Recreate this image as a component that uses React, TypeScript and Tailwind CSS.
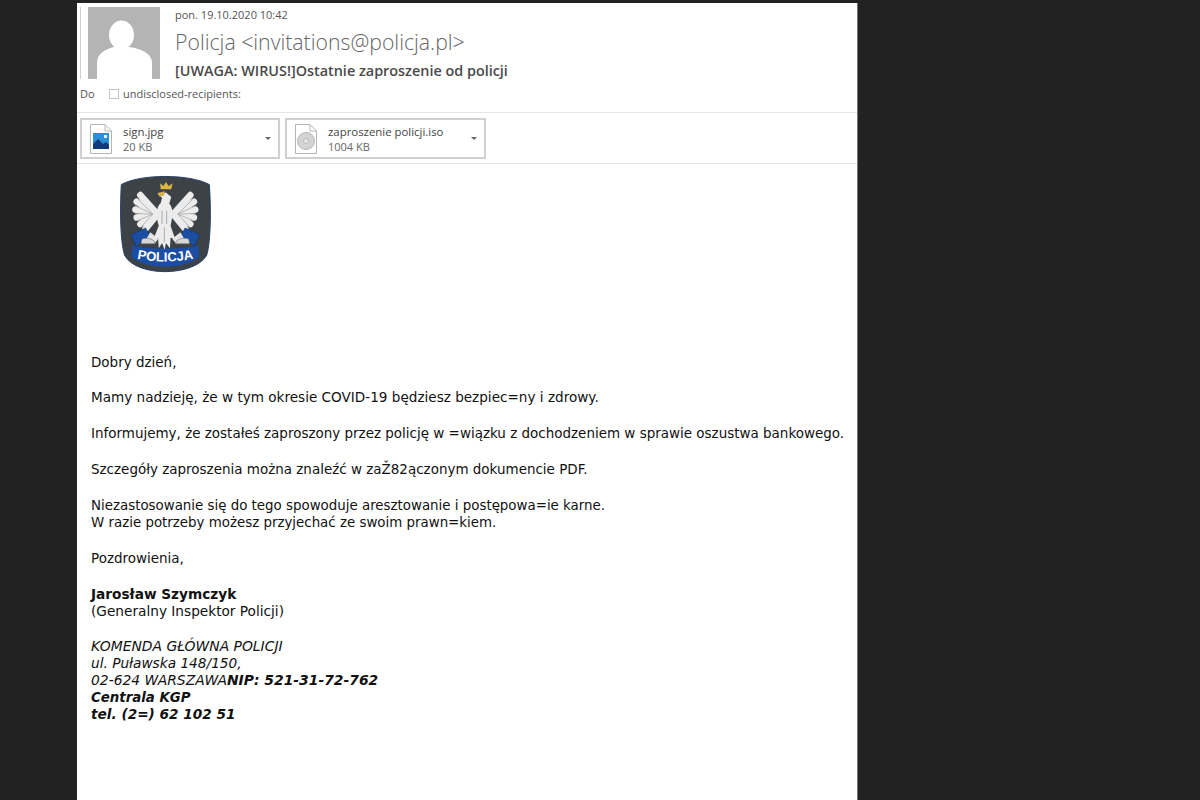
import React from 'react';

const bodyFont = "font-['DejaVu_Sans','Verdana',sans-serif]";

const feathers = [
  [120, 92],
  [109, 112],
  [105, 136],
  [109, 160],
  [120, 180],
  [136, 194],
];

const Wing: React.FC = () => (
  <g>
    {feathers.map(([x, y], i) => (
      <line key={i} x1="172" y1="150" x2={x} y2={y} stroke="#ececec" strokeWidth="20" strokeLinecap="round" />
    ))}
    {feathers.slice(0, -1).map(([x, y], i) => (
      <line key={i} x1="158" y1="150" x2={(x + feathers[i + 1][0]) / 2 - 4} y2={(y + feathers[i + 1][1]) / 2} stroke="#a8abae" strokeWidth="2.5" />
    ))}
    <path d="M92 212 L136 192 L150 218 L122 234 L108 250 Z" fill="#1b4da3" stroke="#0f2f6b" strokeWidth="1.5" />
    <path d="M150 205 L175 225 L165 238 L135 232 Z" fill="#e4e4e4" />
    <path d="M162 232 C150 222 135 222 125 226 L122 240 L165 240 Z" fill="#d8d8d8" stroke="#777" strokeWidth="2" />
  </g>
);

const Logo: React.FC = () => (
  <svg width="92" height="100" viewBox="55 30 280 300" className="block">
    <path d="M62 60 C120 27 270 27 330 60 C335 130 335 230 322 275 C300 312 240 325 195 325 C150 325 92 312 72 275 C58 230 58 130 62 60 Z" fill="#3d4247" stroke="#27406b" strokeWidth="3" />
    <path d="M96 245 C130 258 262 258 296 245 L300 280 C255 320 137 320 92 280 Z" fill="#1b4da3" />
    <Wing />
    <g transform="translate(392,0) scale(-1,1)">
      <Wing />
    </g>
    <path d="M176 92 L198 84 L214 98 L208 118 C222 130 218 160 212 185 L226 226 L212 222 L210 254 L198 238 L194 258 L186 238 L176 254 L174 222 L160 226 L176 185 C168 160 166 130 182 116 L186 100 Z" fill="#ececec" />
    <path d="M186 140 L186 180 M200 140 L200 180 M193 190 L193 236" stroke="#a8abae" strokeWidth="3" fill="none" />
    <path d="M172 86 L194 80 L192 94 L178 96 Z" fill="#d8b24a" />
    <path d="M182 74 L180 56 L190 64 L198 52 L206 64 L218 56 L214 74 Z" fill="#dcb440" />
    <path id="logo-band" d="M104 284 Q195 304 288 284" fill="none" />
    <text fontFamily="'Liberation Sans',sans-serif" fontWeight="700" fontSize="40" fill="#ffffff" textAnchor="middle">
      <textPath href="#logo-band" startOffset="50%">POLICJA</textPath>
    </text>
  </svg>
);

const FileIcon: React.FC<{ kind: 'image' | 'disc' }> = ({ kind }) => (
  <svg width="22" height="30" viewBox="0 0 22 30" className="shrink-0">
    <path d="M.5.5H15L21.5 7V29.5H.5Z" fill="#fff" stroke="#b5b5b5" />
    <path d="M15 .5V7H21.5" fill="none" stroke="#b5b5b5" />
    {kind === 'image' ? (
      <>
        <rect x="3" y="9" width="16" height="16" fill="#2b8fd8" />
        <path d="M3 25V20L8 15L13 20L16 18L19 21V25Z" fill="#123a78" />
        <rect x="14" y="11" width="3" height="3" fill="#dff0fb" />
      </>
    ) : (
      <>
        <circle cx="11" cy="17" r="8.5" fill="#d4d4d4" stroke="#b5b5b5" />
        <circle cx="11" cy="17" r="2.5" fill="#e8e8e8" stroke="#bbb" />
      </>
    )}
  </svg>
);

const Attachment: React.FC<{ name: string; size: string; kind: 'image' | 'disc'; width: string }> = ({ name, size, kind, width }) => (
  <div className={`flex h-[41px] items-center border-2 border-[#d0d0d0] pl-[8px] pr-[7px] ${width}`}>
    <FileIcon kind={kind} />
    <div className="ml-[11px] flex-1 text-[11.4px] leading-[15px]">
      <div className="text-[#444]">{name}</div>
      <div className="text-[11px] text-[#666]">{size}</div>
    </div>
    <div className="h-0 w-0 border-x-[3px] border-t-[3px] border-x-transparent border-t-[#666]" />
  </div>
);

const App: React.FC = () => {
  return (
    <div className="h-[800px] overflow-hidden bg-[#222222] pt-[3px] pl-[77px]">
      <div className="h-full w-[781px] border-r border-[#777] bg-white font-['Open_Sans',sans-serif]">
        <div className="flex pl-[3px] pt-[4px]">
          <div className="h-[72px] w-[80px] border-l border-[#d0d0d0] pl-[7px]">
            <svg width="72" height="72" viewBox="0 0 72 72" className="block">
              <rect width="72" height="72" fill="#b4b4b4" />
              <ellipse cx="33.5" cy="28" rx="12.5" ry="14.5" fill="#fff" />
              <path d="M9 72 V56 C9 46 18 42 26 40 H42 C52 42 64 46 64 56 V72 Z" fill="#fff" />
            </svg>
          </div>
          <div className="ml-[15px]">
            <div className="text-[11px] leading-[15px] text-[#555]">pon. 19.10.2020 10:42</div>
            <div className="mt-[6px] text-[21.25px] font-light leading-[28px] text-[#666]">Policja &lt;invitations@policja.pl&gt;</div>
            <div className="mt-[5px] text-[14.4px] font-semibold leading-[20px] text-[#4a4a4a]">[UWAGA: WIRUS!]Ostatnie zaproszenie od policji</div>
          </div>
        </div>
        <div className="mt-[5px] flex items-center pl-[3px] text-[11px] leading-[16px] text-[#555]">
          <span className="w-[29px]">Do</span>
          <span className="mr-[4px] h-[10px] w-[10px] border border-[#c4c4c4]" />
          <span>undisclosed-recipients:</span>
        </div>
        <div className="mt-[10px] flex gap-[5px] border-y border-[#e6e6e6] pb-[4px] pl-[3px] pt-[5px]">
          <Attachment name="sign.jpg" size="20 KB" kind="image" width="w-[200px]" />
          <Attachment name="zaproszenie policji.iso" size="1004 KB" kind="disc" width="w-[201px]" />
        </div>
        <div className="pl-[42px] pt-[10px]">
          <Logo />
        </div>
        <div className={`${bodyFont} mt-[79.5px] pl-[14px] text-[13.47px] leading-[17.4px] text-[#111]`}>
          <p>Dobry dzień,</p>
          <p className="mt-[18.4px] text-[13.58px]">Mamy nadzieję, że w tym okresie COVID-19 będziesz bezpiec=ny i zdrowy.</p>
          <p className="mt-[18.4px]">Informujemy, że zostałeś zaproszony przez policję w =wiązku z dochodzeniem w sprawie oszustwa bankowego.</p>
          <p className="mt-[18.4px]">Szczegóły zaproszenia można znaleźć w zaŽ82ączonym dokumencie PDF.</p>
          <p className="mt-[18.4px] text-[13.39px]">
            Niezastosowanie się do tego spowoduje aresztowanie i postępowa=ie karne.
            <br />
            W razie potrzeby możesz przyjechać ze swoim prawn=kiem.
          </p>
          <p className="mt-[18.4px]">Pozdrowienia,</p>
          <p className="mt-[18.4px] text-[13.68px]">
            <b>Jarosław Szymczyk</b>
            <br />
            (Generalny Inspektor Policji)
          </p>
          <p className="mt-[17px] text-[13.9px] italic leading-[17.2px]">
            KOMENDA GŁÓWNA POLICJI
            <br />
            <span className="text-[13.7px]">ul. Puławska 148/150,</span>
            <br />
            02-624 WARSZAWA<b>NIP: 521-31-72-762</b>
            <br />
            <b className="text-[13.33px]">Centrala KGP</b>
            <br />
            <b className="text-[13.66px]">tel. (2=) 62 102 51</b>
          </p>
        </div>
      </div>
    </div>
  );
};

export default App;
